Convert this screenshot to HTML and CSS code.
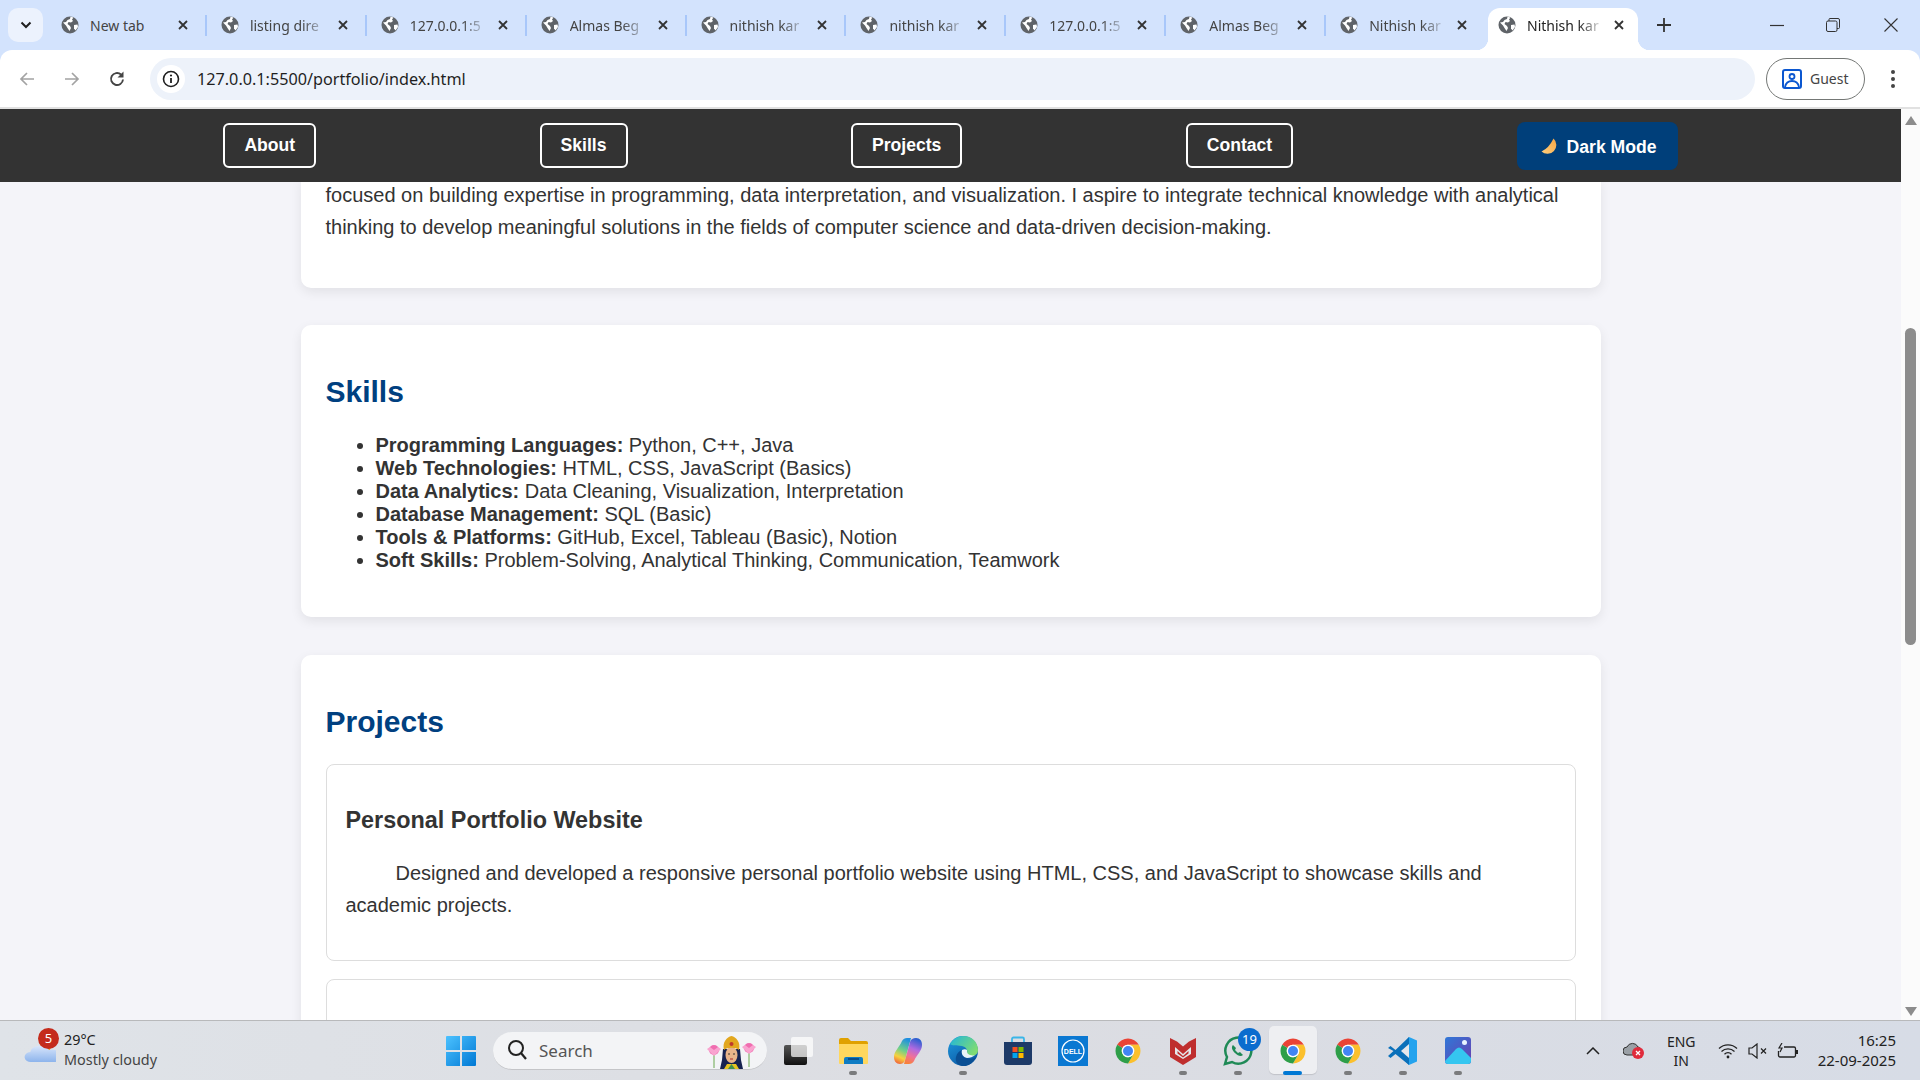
FILE: index.html
```html
<!DOCTYPE html>
<html lang="en">
<head>
  <meta charset="UTF-8" />
  <meta name="viewport" content="width=device-width, initial-scale=1.0"/>
  <title>Nithish kanna - Portfolio</title>
  <link rel="stylesheet" href="styles.css">
</head>
<body>

<svg class="defs" width="0" height="0" aria-hidden="true">
  <symbol id="globe" viewBox="0 0 18 18">
    <circle cx="9" cy="9" r="8.5" fill="#5f6368"/>
    <path d="M2 6.5l3-.5 1.5-2L9 3l.5-2.2 3 .6L11 3.500l1 1.500-2 1.500-2.500-.5-1 2 2.500 2 1 2-1.500 3L6.500 12 5 9.500z" fill="#fff"/>
    <path d="M13 9l3.500-.5.5 2.500-2.500 3.500-1.500-2z" fill="#fff"/>
  </symbol>
  <symbol id="close" viewBox="0 0 12 12">
    <path d="M2 2l8 8M10 2l-8 8" fill="none" stroke="#333" stroke-width="1.800"/>
  </symbol>
  <symbol id="chrome" viewBox="0 0 48 48">
    <path d="M6.680 14A20 20 0 0 1 41.320 14H24A10 10 0 0 0 15.340 19z" fill="#ea4335"/>
    <path d="M41.320 14A20 20 0 0 1 24 44L32.660 29A10 10 0 0 0 24 14z" fill="#fbc02d"/>
    <path d="M24 44A20 20 0 0 1 6.680 14L15.340 19A10 10 0 0 0 32.660 29z" fill="#2e9e48"/>
    <circle cx="24" cy="24" r="10" fill="#fff"/>
    <circle cx="24" cy="24" r="8" fill="#4285f4"/>
  </symbol>
</svg>

<div class="tabstrip">
  <button class="tab-search">
    <svg width="12" height="8" viewBox="0 0 12 8"><path d="M1.500 1.500L6 6l4.500-4.500" fill="none" stroke="#1f1f1f" stroke-width="2"/></svg>
  </button>
  <div class="tabs">
    <div class="tab"><svg class="favicon"><use href="#globe"/></svg><span class="tab-title">New tab</span><svg class="tab-close"><use href="#close"/></svg></div>
    <div class="tab"><svg class="favicon"><use href="#globe"/></svg><span class="tab-title tab-title-fade">listing dire</span><svg class="tab-close"><use href="#close"/></svg></div>
    <div class="tab"><svg class="favicon"><use href="#globe"/></svg><span class="tab-title tab-title-fade">127.0.0.1:5</span><svg class="tab-close"><use href="#close"/></svg></div>
    <div class="tab"><svg class="favicon"><use href="#globe"/></svg><span class="tab-title tab-title-fade">Almas Beg</span><svg class="tab-close"><use href="#close"/></svg></div>
    <div class="tab"><svg class="favicon"><use href="#globe"/></svg><span class="tab-title tab-title-fade">nithish kar</span><svg class="tab-close"><use href="#close"/></svg></div>
    <div class="tab"><svg class="favicon"><use href="#globe"/></svg><span class="tab-title tab-title-fade">nithish kar</span><svg class="tab-close"><use href="#close"/></svg></div>
    <div class="tab"><svg class="favicon"><use href="#globe"/></svg><span class="tab-title tab-title-fade">127.0.0.1:5</span><svg class="tab-close"><use href="#close"/></svg></div>
    <div class="tab"><svg class="favicon"><use href="#globe"/></svg><span class="tab-title tab-title-fade">Almas Beg</span><svg class="tab-close"><use href="#close"/></svg></div>
    <div class="tab tab-before-active"><svg class="favicon"><use href="#globe"/></svg><span class="tab-title tab-title-fade">Nithish kar</span><svg class="tab-close"><use href="#close"/></svg></div>
    <div class="tab tab-active"><svg class="favicon"><use href="#globe"/></svg><span class="tab-title tab-title-fade">Nithish kar</span><svg class="tab-close"><use href="#close"/></svg></div>
  </div>
  <svg class="new-tab" width="14" height="14" viewBox="0 0 14 14"><path d="M7 0v14M0 7h14" stroke="#333" stroke-width="1.800"/></svg>
  <div class="window-controls">
    <svg width="14" height="14" viewBox="0 0 14 14"><path d="M0 7.500h14" stroke="#333" stroke-width="1.200"/></svg>
    <svg width="14" height="14" viewBox="0 0 14 14"><path d="M3 3V1.500A1 1 0 0 1 4 .5h8a1.500 1.500 0 0 1 1.500 1.500v7.500a1 1 0 0 1-1 1H11" fill="none" stroke="#333"/><rect x=".5" y="3" width="10.500" height="10.500" rx="1.500" fill="none" stroke="#333"/></svg>
    <svg class="win-close" width="14" height="14" viewBox="0 0 14 14"><path d="M.5.5l13 13M13.500.5l-13 13" stroke="#333" stroke-width="1.100"/></svg>
  </div>
</div>

<div class="toolbar">
  <svg class="tool-btn" width="18" height="18" viewBox="0 0 18 18"><path d="M16 9H3M9 3L3 9l6 6" fill="none" stroke="#a3a3a3" stroke-width="1.700"/></svg>
  <svg class="tool-btn" width="18" height="18" viewBox="0 0 18 18"><path d="M2 9h13M9 3l6 6-6 6" fill="none" stroke="#a3a3a3" stroke-width="1.700"/></svg>
  <svg class="tool-btn" width="18" height="18" viewBox="0 0 18 18"><path d="M15 9.500A6 6 0 1 1 13 4.500" fill="none" stroke="#444" stroke-width="1.900"/><path d="M15.500 1.500v6h-6z" fill="#444"/></svg>
  <div class="address-bar">
    <span class="site-info">
      <svg width="18" height="18" viewBox="0 0 18 18"><circle cx="9" cy="9" r="7.500" fill="none" stroke="#1f1f1f" stroke-width="1.600"/><path d="M9 8v5" stroke="#1f1f1f" stroke-width="1.800"/><circle cx="9" cy="5.500" r="1.100" fill="#1f1f1f"/></svg>
    </span>
    <span class="url">127.0.0.1:5500/portfolio/index.html</span>
  </div>
  <div class="guest-pill">
    <svg width="20" height="20" viewBox="0 0 20 20"><rect x="1" y="1" width="18" height="18" rx="2" fill="none" stroke="#0b57d0" stroke-width="2"/><circle cx="10" cy="7.500" r="2.500" fill="none" stroke="#0b57d0" stroke-width="1.800"/><path d="M3 18c1-5 4-6 7-6s6 1 7 6" fill="none" stroke="#0b57d0" stroke-width="1.800"/></svg>
    <span>Guest</span>
  </div>
  <svg class="kebab" width="6" height="20" viewBox="0 0 6 20"><circle cx="3" cy="3" r="2" fill="#444"/><circle cx="3" cy="10" r="2" fill="#444"/><circle cx="3" cy="17" r="2" fill="#444"/></svg>
</div>

<div class="window">
  <div class="page">
    <nav class="navbar">
      <a class="nav-link">About</a>
      <a class="nav-link">Skills</a>
      <a class="nav-link">Projects</a>
      <a class="nav-link">Contact</a>
      <button class="dark-toggle">
        <svg width="18" height="18" viewBox="0 0 18 18">
          <defs><linearGradient id="moonFill" x1="0" y1="1" x2="1" y2="0"><stop offset="0" stop-color="#ffcf7d"/><stop offset="1" stop-color="#f6a544"/></linearGradient></defs>
          <path d="M12.500 .5A8.800 8.800 0 1 1 .5 13.500Q8 10 12.500 .5z" fill="url(#moonFill)"/>
        </svg>
        Dark Mode
      </button>
    </nav>

    <main class="content">
      <section class="card card-about">
        <p>focused on building expertise in programming, data interpretation, and visualization. I aspire to integrate technical knowledge with analytical thinking to develop meaningful solutions in the fields of computer science and data-driven decision-making.</p>
      </section>

      <section class="card card-skills">
        <h2>Skills</h2>
        <ul>
          <li><strong>Programming Languages:</strong> Python, C++, Java</li>
          <li><strong>Web Technologies:</strong> HTML, CSS, JavaScript (Basics)</li>
          <li><strong>Data Analytics:</strong> Data Cleaning, Visualization, Interpretation</li>
          <li><strong>Database Management:</strong> SQL (Basic)</li>
          <li><strong>Tools &amp; Platforms:</strong> GitHub, Excel, Tableau (Basic), Notion</li>
          <li><strong>Soft Skills:</strong> Problem-Solving, Analytical Thinking, Communication, Teamwork</li>
        </ul>
      </section>

      <section class="card">
        <h2>Projects</h2>
        <div class="project">
          <h3>Personal Portfolio Website</h3>
          <p class="project-text">Designed and developed a responsive personal portfolio website using HTML, CSS, and JavaScript to showcase skills and academic projects.</p>
        </div>
        <div class="project project-next"></div>
      </section>
    </main>
  </div>

  <div class="scrollbar">
    <span class="arrow-up"></span>
    <span class="thumb"></span>
    <span class="arrow-down"></span>
  </div>
</div>

<footer class="taskbar">
  <div class="weather">
    <span class="weather-icon">
      <svg width="32" height="34" viewBox="0 0 32 34">
        <defs><linearGradient id="cloudFill" x1="0" y1="0" x2="0" y2="1"><stop offset="0" stop-color="#d9e6fb"/><stop offset="1" stop-color="#8db4ec"/></linearGradient></defs>
        <circle cx="22" cy="11" r="6" fill="#f59a23"/>
        <g transform="translate(0 9) scale(1.250 1)">
          <path d="M6 19a5 5 0 0 1-1-10 8 8 0 0 1 15-2 6 6 0 0 1 5 12z" fill="url(#cloudFill)"/>
        </g>
      </svg>
      <span class="weather-badge">5</span>
    </span>
    <div class="weather-text">
      <span class="temp">29°C</span>
      <span class="cond">Mostly cloudy</span>
    </div>
  </div>

  <svg class="win-logo" width="30" height="30" viewBox="0 0 30 30">
    <defs><linearGradient id="winFill" x1="0" y1="0" x2="1" y2="1"><stop offset="0" stop-color="#4cc2ff"/><stop offset="1" stop-color="#0078d4"/></linearGradient></defs>
    <path d="M0 1a1 1 0 0 1 1-1h13v14H0zM16 0h13a1 1 0 0 1 1 1v13H16zM0 16h14v14H1a1 1 0 0 1-1-1zM16 16h14v13a1 1 0 0 1-1 1H16z" fill="url(#winFill)"/>
  </svg>

  <div class="search-box">
    <svg width="20" height="22" viewBox="0 0 20 22"><circle cx="9" cy="9" r="7" fill="none" stroke="#222" stroke-width="2"/><path d="M14 14l5 6" stroke="#222" stroke-width="2.200"/></svg>
    <span class="search-label">Search</span>
    <svg class="search-art" width="50" height="33" viewBox="0 0 50 33">
      <path d="M8 15v17M43 14v17" stroke="#6aa84f" stroke-width="1"/>
      <circle cx="8" cy="14" r="5" fill="#f06db0"/><path d="M1 13l7 7 7-7-3-2-4 3-4-3z" fill="#f9a3cf"/>
      <circle cx="43" cy="12" r="5" fill="#f06db0"/><path d="M36 11l7 7 7-7-3-2-4 3-4-3z" fill="#f9a3cf"/>
      <path d="M14 33l2-9 1-11h17l1 11 2 9z" fill="#16224f"/>
      <path d="M18 33l3-5h9l3 5z" fill="#e5c220"/>
      <path d="M22 33l3.500-5 3.500 5z" fill="#3f8f4f"/>
      <ellipse cx="25.500" cy="19" rx="6" ry="8" fill="#e8b48a"/>
      <path d="M18 14c-2-8 3-13 7.500-14 4.500 1 9.500 6 7.500 14-3-3-12-3-15 0z" fill="#e2a71e"/>
      <circle cx="25.500" cy="8" r="2" fill="#c0392b"/>
      <circle cx="23" cy="18" r=".8" fill="#222"/><circle cx="28" cy="18" r=".8" fill="#222"/>
      <path d="M24 23h3" stroke="#b2413a" stroke-width="1.200"/>
    </svg>
  </div>

  <div class="apps">
    <div class="app">
      <svg class="app-icon" viewBox="0 0 30 30">
        <defs><linearGradient id="tvDark" x1="0" y1="0" x2="0" y2="1"><stop offset="0" stop-color="#555"/><stop offset="1" stop-color="#111"/></linearGradient></defs>
        <rect x="1" y="9" width="23" height="20" rx="2" fill="url(#tvDark)"/>
        <rect x="8" y="1" width="22" height="20" rx="2" fill="#fff" fill-opacity=".72"/>
      </svg>
      <span class="app-dot app-dot-hidden"></span>
    </div>
    <div class="app">
      <svg class="app-icon" viewBox="0 0 30 30">
        <path d="M1 4a2 2 0 0 1 2-2h7l3 3h15a2 2 0 0 1 2 2v3H1z" fill="#e0a100"/>
        <path d="M1 8h29v19a1 1 0 0 1-1 1H2a1 1 0 0 1-1-1z" fill="#ffd75e"/>
        <path d="M6 28v-5a2 2 0 0 1 2-2h15a2 2 0 0 1 2 2v5z" fill="#0f7cc4"/>
        <path d="M10 23h11" stroke="#063f7a" stroke-width="1.500"/>
      </svg>
      <span class="app-dot"></span>
    </div>
    <div class="app">
      <svg class="app-icon" viewBox="0 0 30 30">
        <defs>
          <linearGradient id="copA" x1=".6" y1="0" x2=".3" y2="1"><stop offset="0" stop-color="#1f8fe0"/><stop offset=".45" stop-color="#6fd08a"/><stop offset=".75" stop-color="#f7d23e"/><stop offset="1" stop-color="#f0683a"/></linearGradient>
          <linearGradient id="copB" x1=".6" y1="0" x2=".3" y2="1"><stop offset="0" stop-color="#2a5fd0"/><stop offset=".4" stop-color="#b06ae0"/><stop offset=".7" stop-color="#f0709a"/><stop offset="1" stop-color="#f8813a"/></linearGradient>
        </defs>
        <path d="M9 5c1-2 3-3 5-3h4L12 24c-1 3-3 4-5 4-4 0-6-3-6-7 0-6 5-9 8-16z" fill="url(#copA)"/>
        <path d="M21 25c-1 2-3 3-5 3h-5L17 6c1-3 3-4 6-4 4 0 6 3 6 7 0 6-5 9-8 16z" fill="url(#copB)"/>
      </svg>
      <span class="app-dot app-dot-hidden"></span>
    </div>
    <div class="app">
      <svg class="app-icon" viewBox="0 0 30 30">
        <defs>
          <linearGradient id="edgeTop" x1="0" y1="0" x2="1" y2=".6"><stop offset="0" stop-color="#1fb5dc"/><stop offset="1" stop-color="#7fdc72"/></linearGradient>
          <linearGradient id="edgeBlue" x1="0" y1="0" x2=".6" y2="1"><stop offset="0" stop-color="#1e9be0"/><stop offset="1" stop-color="#0c59a4"/></linearGradient>
        </defs>
        <circle cx="15" cy="15" r="15" fill="url(#edgeBlue)"/>
        <path d="M2 8C5 3 10 0 15 0c9 0 15 6 15 14 0 4-3 6-7 6-3 0-5-1-4-3 1-3-1-6-5-7-6-1-10 0-12-2z" fill="url(#edgeTop)"/>
        <path d="M14 30c-5-1-7-5-6-9 1-4 3-6 6-7-1 3 0 7 5 8 3 1 6 1 9-1-3 6-8 10-14 9z" fill="#0a4f94"/>
        <path d="M14 14c2-1 4-1 5 0 0 2 0 4 3 5 2 .5 4 .5 5 0-2 2-5 3-8 3-4-1-6-4-5-8z" fill="#e9f4f8"/>
      </svg>
      <span class="app-dot"></span>
    </div>
    <div class="app">
      <svg class="app-icon" viewBox="0 0 30 30">
        <path d="M9 8V3a1.500 1.500 0 0 1 1.500-1.500h9A1.500 1.500 0 0 1 21 3v5" fill="none" stroke="#3bb6e8" stroke-width="1.800"/>
        <path d="M1 6h28v20a3 3 0 0 1-3 3H4a3 3 0 0 1-3-3z" fill="#1d3a68"/>
        <rect x="9.500" y="11" width="5" height="5" fill="#f25022"/>
        <rect x="15.500" y="11" width="5" height="5" fill="#7fba00"/>
        <rect x="9.500" y="17" width="5" height="5" fill="#00a4ef"/>
        <rect x="15.500" y="17" width="5" height="5" fill="#ffb900"/>
      </svg>
      <span class="app-dot app-dot-hidden"></span>
    </div>
    <div class="app">
      <svg class="app-icon" viewBox="0 0 30 30">
        <rect width="30" height="30" fill="#0a78d2"/>
        <circle cx="15" cy="15" r="11" fill="none" stroke="#fff" stroke-width="1.200"/>
        <text class="dell-text" x="15" y="17.500" text-anchor="middle">DELL</text>
      </svg>
      <span class="app-dot app-dot-hidden"></span>
    </div>
    <div class="app">
      <svg class="app-icon"><use href="#chrome"/></svg>
      <span class="app-dot app-dot-hidden"></span>
    </div>
    <div class="app">
      <svg class="app-icon" viewBox="0 0 30 30">
        <path d="M2 2l7 3.500 6 5 6-5 7-3.500v19l-13 8-13-8z" fill="#bf2e2e"/>
        <path d="M7 11l8 7 8-7v7l-8 5-8-5z" fill="#e4e6ea"/>
        <path d="M9.500 15l5.500 5 5.500-5v2.500L15 21.500l-5.500-4z" fill="#bf2e2e"/>
      </svg>
      <span class="app-dot"></span>
    </div>
    <div class="app">
      <svg class="app-icon" viewBox="0 0 30 30">
        <path d="M2 28l2-7A13 13 0 1 1 9 26z" fill="none" stroke="#1f8a56" stroke-width="2.500"/>
        <path d="M10 9c-2 2-1 5 2 8s6 4 8 2l-3-3-2 1-3-3 1-2z" fill="#1f8a56"/>
      </svg>
      <span class="app-badge">19</span>
      <span class="app-dot"></span>
    </div>
    <div class="app app-active">
      <svg class="app-icon"><use href="#chrome"/></svg>
      <span class="app-dot"></span>
    </div>
    <div class="app">
      <svg class="app-icon"><use href="#chrome"/></svg>
      <span class="app-dot"></span>
    </div>
    <div class="app">
      <svg class="app-icon" viewBox="0 0 30 30">
        <path d="M21 1l8 3.500v21L21 29 9 17z" fill="#24a3ee"/>
        <path d="M21 1L7.500 14 2.500 10 0 12l5.500 3L0 20l2.500 2 5-4L21 29z" fill="#0a70ba"/>
        <path d="M21 8l-8 7 8 7z" fill="#e4e7ec"/>
      </svg>
      <span class="app-dot"></span>
    </div>
    <div class="app">
      <svg class="app-icon" viewBox="0 0 30 30">
        <defs><linearGradient id="photoBg" x1="0" y1="0" x2="1" y2="1"><stop offset="0" stop-color="#2f78d8"/><stop offset="1" stop-color="#6a3fb0"/></linearGradient></defs>
        <rect x="2" y="1" width="26" height="27" rx="3" fill="url(#photoBg)"/>
        <path d="M2 25l11-12c2-2 4-2 6 0l9 9v3a3 3 0 0 1-3 3H5a3 3 0 0 1-3-3z" fill="#35c6f0"/>
        <circle cx="21.500" cy="6.500" r="2.500" fill="#e8f4ff"/>
      </svg>
      <span class="app-dot"></span>
    </div>
  </div>

  <div class="tray">
    <svg class="tray-chevron" width="14" height="8" viewBox="0 0 14 8"><path d="M1 7l6-6 6 6" fill="none" stroke="#222" stroke-width="1.500"/></svg>
    <svg class="tray-cloud" width="22" height="18" viewBox="0 0 22 18">
      <path d="M4 13a4 4 0 0 1 0-8 6 6 0 0 1 11 0 3 3 0 0 1 2 5v3z" fill="#9aa0a6" stroke="#333" stroke-width="1"/>
      <circle cx="15" cy="11" r="6" fill="#e02b3c"/>
      <path d="M13 9l4 4M17 9l-4 4" stroke="#fff" stroke-width="1.300"/>
    </svg>
    <div class="tray-lang"><span>ENG</span><span>IN</span></div>
    <svg class="tray-wifi" width="20" height="16" viewBox="0 0 20 16"><path d="M1 5.500a13 13 0 0 1 18 0M3.500 8.500a9.500 9.500 0 0 1 13 0M6.500 11.200a5 5 0 0 1 7 0" fill="none" stroke="#222" stroke-width="1.300"/><circle cx="10" cy="14" r="1.400" fill="#222"/></svg>
    <svg class="tray-sound" width="20" height="16" viewBox="0 0 20 16"><path d="M1 5h3l5-4v14l-5-4H1z" fill="none" stroke="#222" stroke-width="1.200"/><path d="M13 5.500l5 5M18 5.500l-5 5" stroke="#222" stroke-width="1.200"/></svg>
    <svg class="tray-batt" width="21" height="16" viewBox="0 0 21 16"><path d="M7 4h10a1.500 1.500 0 0 1 1.500 1.500v7A1.500 1.500 0 0 1 17 14H3a1.500 1.500 0 0 1-1.500-1.500V8" fill="none" stroke="#222" stroke-width="1.300"/><path d="M19 7h2v4h-2z" fill="#222"/><path d="M5 0L2 5h3L3 9" fill="none" stroke="#222" stroke-width="1.200"/></svg>
    <div class="tray-clock"><span>16:25</span><span>22-09-2025</span></div>
  </div>
</footer>

</body>
</html>
```

FILE: styles.css
```css
:root {
  --blue-tint: #d3e3fd;
  --heading: #004080;
  --nav-bg: #333;
  --page-bg: #f4f4f9;
  --text-color: #333;
}

* {
  box-sizing: border-box;
  margin: 0;
  padding: 0;
}

html, body {
  width: 1920px;
  height: 1080px;
  overflow: hidden;
}

body {
  font-family: 'Liberation Sans', Arial, sans-serif;
  background: var(--blue-tint);
  color: var(--text-color);
  display: flex;
  flex-direction: column;
}

.defs {
  display: block;
  height: 0;
}

/* Browser frame */
.tabstrip {
  height: 50px;
  display: flex;
  align-items: center;
  padding-left: 8px;
  font-family: 'Noto Sans', 'Open Sans', sans-serif;
  font-size: 14px;
  flex-shrink: 0;
}

.tab-search {
  width: 35px;
  height: 34px;
  margin-top: -1px;
  border: none;
  border-radius: 10px;
  background: #ecf2fd;
  display: flex;
  align-items: center;
  justify-content: center;
  flex-shrink: 0;
}

.tabs {
  display: flex;
  align-items: center;
  height: 100%;
  margin-left: 4px;
}

.tab {
  position: relative;
  width: 159.9px;
  height: 21px;
  display: flex;
  align-items: center;
  padding-left: 14px;
  padding-right: 16px;
  color: #444;
  border-right: 2px solid #a8c7fa;
}

.tab-before-active {
  border-right-color: transparent;
}

.favicon {
  width: 18px;
  height: 18px;
  flex-shrink: 0;
}

.tab-title {
  flex: 1;
  margin-left: 11px;
  white-space: nowrap;
}

.tab-title-fade {
  -webkit-mask-image: linear-gradient(to right, #000 65%, transparent 98%);
  mask-image: linear-gradient(to right, #000 65%, transparent 98%);
}

.tab-close {
  width: 12px;
  height: 12px;
  margin-left: 7px;
  flex-shrink: 0;
}

.tab-active {
  align-self: flex-end;
  height: 42px;
  width: 150px;
  padding: 0 13px 8px 10px;
  margin-left: 2px;
  background: #fff;
  border: none;
  border-radius: 12px 12px 0 0;
  color: #222;
}

.tab-active::before,
.tab-active::after {
  content: "";
  position: absolute;
  bottom: 0;
  width: 12px;
  height: 12px;
}

.tab-active::before {
  left: -12px;
  background: radial-gradient(circle at 0 0, transparent 12px, #fff 12.5px);
}

.tab-active::after {
  right: -12px;
  background: radial-gradient(circle at 100% 0, transparent 12px, #fff 12.5px);
}

.new-tab {
  margin-left: 19px;
  flex-shrink: 0;
}

.window-controls {
  margin-left: auto;
  display: flex;
  gap: 42px;
  padding-right: 22px;
  align-items: center;
  height: 100%;
}

.window-controls svg {
  display: block;
}

.window-controls .win-close {
  margin-left: 2px;
}

.toolbar {
  height: 59px;
  flex-shrink: 0;
  display: flex;
  align-items: center;
  background: #fff;
  border-radius: 12px 12px 0 0;
  border-bottom: 2px solid #e1e1e1;
  padding-left: 18px;
  font-family: 'Noto Sans', 'Open Sans', sans-serif;
}

.tool-btn {
  margin-right: 27px;
  flex-shrink: 0;
}

.tool-btn:nth-child(3) {
  margin-right: 0;
}

.address-bar {
  width: 1605px;
  height: 42px;
  margin-left: 24px;
  border-radius: 21px;
  background: #edf2fa;
  display: flex;
  align-items: center;
  padding-left: 7px;
}

.site-info {
  width: 28px;
  height: 28px;
  border-radius: 50%;
  background: #fff;
  display: flex;
  align-items: center;
  justify-content: center;
}

.url {
  margin-left: 12px;
  font-size: 16.2px;
  color: #1f1f1f;
}

.guest-pill {
  width: 98.5px;
  height: 42px;
  margin-left: 11px;
  border: 1.500px solid #747775;
  border-radius: 21px;
  display: flex;
  align-items: center;
  padding-left: 15px;
  gap: 8px;
  font-size: 14px;
  color: #444;
}

.kebab {
  margin-left: 25px;
}

.window {
  height: 911px;
  flex-shrink: 0;
  display: flex;
  overflow: hidden;
}

.page {
  width: 1901px;
  display: flex;
  flex-direction: column;
  background: var(--page-bg);
}

/* Portfolio page */
.navbar {
  height: 73px;
  flex-shrink: 0;
  background: var(--nav-bg);
  display: flex;
  justify-content: space-evenly;
  align-items: center;
  padding: 1px 0 0;
}

.nav-link {
  border: 2px solid #fff;
  border-radius: 6px;
  padding: 10px 19px;
  margin-bottom: 2px;
  color: #fff;
  font-weight: bold;
  font-size: 17.6px;
}

.dark-toggle {
  display: flex;
  align-items: center;
  gap: 8px;
  height: 48px;
  padding: 2px 21px 0 24px;
  border: none;
  border-radius: 8px;
  background: #003f7a;
  color: #fff;
  font-family: inherit;
  font-weight: bold;
  font-size: 17.6px;
}

.content {
  flex: 1;
  overflow: hidden;
}

.card {
  width: 1300px;
  margin: 0 auto 37px;
  padding: 25px;
  background: #fff;
  border-radius: 10px;
  box-shadow: 0 4px 12px rgba(0, 0, 0, 0.08);
  font-size: 20px;
}

/* scrolled under the fixed nav, so the top of this card is out of view */
.card-about {
  margin-top: -3.5px;
  padding-top: 0;
  border-radius: 0 0 10px 10px;
}

.card-skills {
  margin-bottom: 38px;
}

.card p {
  line-height: 1.6;
  margin-bottom: 20px;
}

.card h2 {
  color: var(--heading);
  font-size: 30px;
  margin: 25px 0;
}

.card ul {
  margin: 25px 0 20px;
  padding-left: 50px;
}

.project {
  border: 1px solid #ddd;
  border-radius: 8px;
  padding: 19px;
  margin-bottom: 18px;
}

.project h3 {
  font-size: 23.4px;
  margin: 23.4px 0;
}

.project-text {
  text-indent: 50px;
}

.project-next {
  height: 120px;
}

.scrollbar {
  width: 19px;
  flex-shrink: 0;
  background: #fbfbfb;
  display: flex;
  flex-direction: column;
  align-items: center;
}

.arrow-up,
.arrow-down {
  width: 0;
  height: 0;
  border-left: 6.5px solid transparent;
  border-right: 6.5px solid transparent;
}

.arrow-up {
  margin-top: 7px;
  border-bottom: 9px solid #8c8c8c;
}

.thumb {
  width: 11px;
  height: 317px;
  margin-top: 203px;
  border-radius: 6px;
  background: #8c8c8c;
}

.arrow-down {
  margin-top: auto;
  margin-bottom: 4px;
  border-top: 9px solid #8c8c8c;
}

/* Windows taskbar */
.taskbar {
  height: 60px;
  flex-shrink: 0;
  display: flex;
  align-items: center;
  border-top: 1px solid #b8b9bb;
  background: linear-gradient(to right, #dfe3e8, #dcdde2 50%, #d7dce6);
  font-family: 'Noto Sans', 'Open Sans', sans-serif;
  font-size: 14px;
  color: #222;
}

.weather {
  width: 446px;
  display: flex;
  align-items: center;
  padding-left: 24px;
  flex-shrink: 0;
}

.weather-icon {
  position: relative;
  width: 40px;
  height: 34px;
}

.weather-badge {
  position: absolute;
  left: 14px;
  top: -6px;
  width: 21px;
  height: 21px;
  border-radius: 50%;
  background: #c42b1c;
  color: #fff;
  font-size: 13px;
  text-align: center;
  line-height: 21px;
}

.weather-text {
  display: flex;
  flex-direction: column;
  margin-bottom: 2px;
  font-size: 14.4px;
  line-height: 20px;
  white-space: nowrap;
}

.cond {
  color: #444;
}

.win-logo {
  flex-shrink: 0;
}

.search-box {
  width: 274px;
  height: 38px;
  margin-left: 17px;
  flex-shrink: 0;
  display: flex;
  align-items: center;
  padding-left: 14px;
  border-radius: 19px;
  background: #f3f4f6;
  border-bottom: 1px solid #c4c5c8;
  font-size: 17px;
}

.search-label {
  margin-left: 12px;
  color: #555;
}

.search-art {
  margin-left: auto;
  margin-right: 11px;
  margin-top: 4px;
}

.apps {
  display: flex;
  margin-left: 3px;
  height: 100%;
}

.app {
  position: relative;
  width: 55px;
  display: flex;
  flex-direction: column;
  align-items: center;
  padding-top: 15px;
  gap: 5px;
}

.app-icon {
  width: 30px;
  height: 30px;
  position: relative;
}

.app-dot {
  position: relative;
  width: 8px;
  height: 4px;
  border-radius: 2px;
  background: #7a7b7d;
}

.app-dot-hidden {
  visibility: hidden;
}

.app-active::before {
  content: "";
  position: absolute;
  left: 3.500px;
  top: 5px;
  width: 48px;
  height: 48px;
  border-radius: 5px;
  background: #eeeff2;
  box-shadow: 0 1px 1px rgba(0, 0, 0, 0.12);
}

.app-active .app-dot {
  width: 19px;
  background: #0078d4;
}

.app-badge {
  position: absolute;
  left: 28px;
  top: 7px;
  width: 23px;
  height: 23px;
  border-radius: 50%;
  background: #0a6cce;
  color: #fff;
  font-size: 13px;
  line-height: 23px;
  text-align: center;
}

.dell-text {
  font-family: 'Liberation Sans', sans-serif;
  font-size: 7px;
  font-weight: bold;
  fill: #fff;
}

.tray {
  margin-left: auto;
  padding-right: 24px;
  display: flex;
  align-items: center;
  color: #222;
}

.tray-chevron {
  margin-right: 23px;
}

.tray-lang {
  margin-left: 16px;
  width: 40px;
  display: flex;
  flex-direction: column;
  align-items: center;
  line-height: 19px;
}

.tray-wifi {
  margin-left: 17px;
}

.tray-sound {
  margin-left: 10px;
}

.tray-batt {
  margin-left: 8.5px;
}

.tray-clock {
  margin-left: 20px;
  margin-bottom: 2px;
  display: flex;
  flex-direction: column;
  align-items: flex-end;
  font-size: 15px;
  line-height: 20px;
}
```
